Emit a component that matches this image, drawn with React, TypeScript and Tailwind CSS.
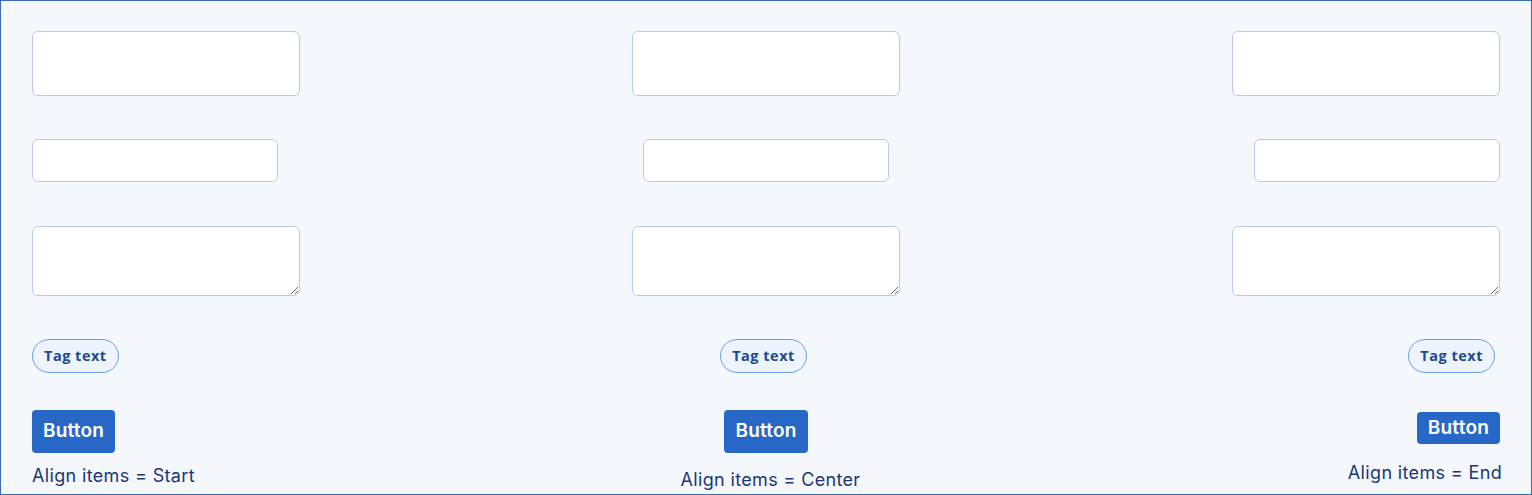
import React from "react";

type Align = "start" | "center" | "end";

const alignClass: Record<Align, string> = {
  start: "items-start",
  center: "items-center",
  end: "items-end",
};

const fieldBase =
  "block bg-white border border-[#b7cbe9] rounded-[6px] outline-none";

function Column({ align, label }: { align: Align; label: string }) {
  const isEnd = align === "end";
  return (
    <div className={`flex flex-col ${alignClass[align]}`}>
      <input type="text" className={`${fieldBase} w-[268px] h-[65px]`} />
      <input type="text" className={`${fieldBase} w-[246px] h-[43px] mt-[43px]`} />
      <textarea className={`${fieldBase} w-[268px] h-[70px] mt-[44px]`} />
      <span className="mt-[43px] mr-[5px] h-[34px] px-[11px] flex items-center rounded-full border border-[#6b9fe6] bg-[#edf4fe] text-[#1d4a90] text-[14.5px] font-bold tracking-[0.5px] font-['Open_Sans',sans-serif]">
        Tag text
      </span>
      <button
        className={`${isEnd ? "h-[32px] mt-[39px]" : "h-[43px] mt-[37px]"} px-[11px] rounded-[4px] bg-[#2767c6] text-white text-[19px] font-semibold tracking-[0.2px] font-['Inter',sans-serif]`}
      >
        Button
      </button>
      <p
        className={`${align === "start" ? "mt-[11px]" : align === "center" ? "mt-[15px] ml-[7px]" : "mt-[17px]"} mr-[-2px] text-[18px] leading-[24px] tracking-[0.35px] text-[#1c3674] font-['Inter',sans-serif]`}
      >
        {label}
      </p>
    </div>
  );
}

export default function App() {
  return (
    <div className="w-[1532px] h-[495px] border border-[#3a6cb3] bg-[#f4f7fc] overflow-hidden">
      <div className="grid grid-cols-3 gap-8 pl-[31px] pr-[31px] pt-[30px]">
        <Column align="start" label="Align items = Start" />
        <Column align="center" label="Align items = Center" />
        <Column align="end" label="Align items = End" />
      </div>
    </div>
  );
}
